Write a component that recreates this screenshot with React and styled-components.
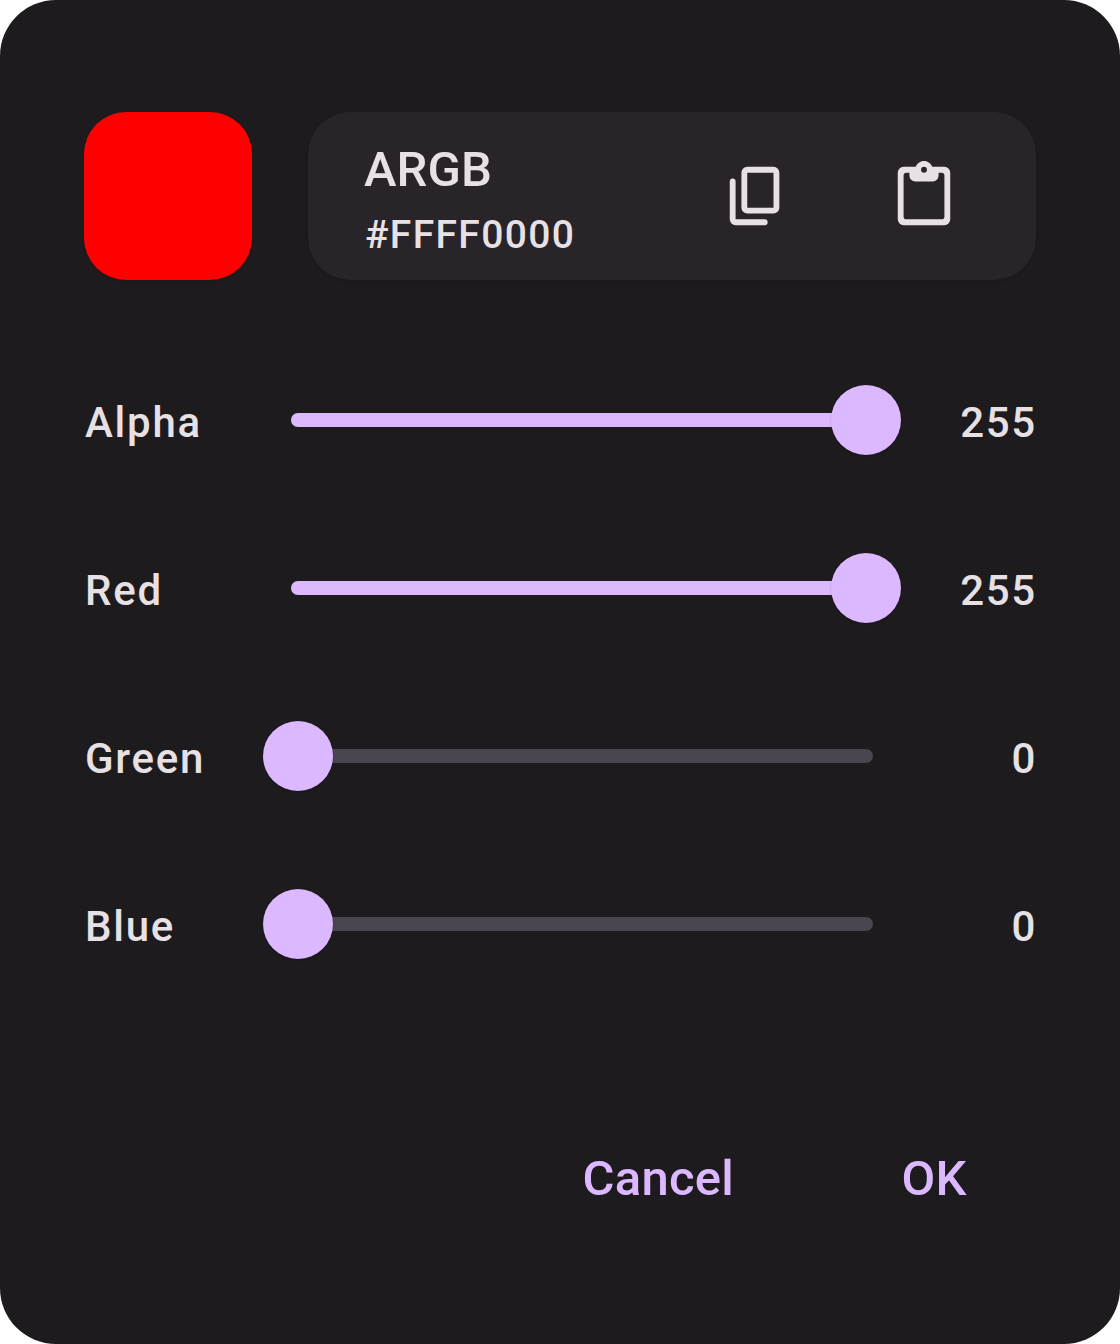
import React, { useState } from "react";
import styled, { createGlobalStyle } from "styled-components";

const GlobalStyle = createGlobalStyle`
  * { box-sizing: border-box; }
  body { margin: 0; background: #ffffff; }
`;

const Dialog = styled.main`
  display: flex;
  flex-direction: column;
  width: 1120px;
  height: 1344px;
  padding: 112px 84px 0;
  border-radius: 56px;
  background: #1d1b1e;
  color: #e7e1e5;
  font-family: Roboto, "Liberation Sans", sans-serif;
  font-weight: 500;
`;

const Header = styled.header`
  display: flex;
  gap: 56px;
  height: 168px;
`;

const Swatch = styled.div`
  width: 168px;
  height: 168px;
  border-radius: 42px;
  background: ${(p) => p.$color};
  box-shadow: 0 1px 3px rgba(0, 0, 0, 0.14);
`;

const ValueCard = styled.section`
  display: flex;
  flex: 1;
  align-items: center;
  padding: 0 28px 0 56px;
  border-radius: 42px;
  background: #282429;
  box-shadow: 0 1px 3px rgba(0, 0, 0, 0.14);
`;

const ValueText = styled.div`
  display: flex;
  flex: 1;
  flex-direction: column;
  padding-top: 6px;
`;

const Format = styled.span`
  font-size: 49px;
  line-height: 70px;
  letter-spacing: 0.1px;
`;

const Hex = styled.span`
  height: 58px;
  padding: 2px 0 0 1px;
  font-size: 39px;
  line-height: 56px;
  letter-spacing: 1.35px;
`;

const IconButton = styled.button`
  display: grid;
  place-items: center;
  width: 168px;
  height: 168px;
  padding: 0;
  border: 0;
  background: none;
  color: inherit;
`;

const Icon = styled.svg`
  width: 70px;
  height: 70px;
  fill: currentColor;
`;

const Channels = styled.section`
  display: flex;
  flex-direction: column;
  padding-top: 56px;
`;

const Channel = styled.div`
  display: grid;
  grid-template-columns: 206px 582px 1fr;
  align-items: center;
  height: 168px;
  margin: 0 -1px 0 1px;
`;

const ChannelText = styled.span`
  padding-top: 5px;
  font-size: 42px;
  line-height: 56px;
  letter-spacing: 1.75px;
  text-align: ${(p) => p.$align || "left"};
`;

const Track = styled.div`
  position: relative;
  height: 14px;
  border-radius: 7px;
  background: #4a454e;
`;

const Fill = styled.div`
  height: 14px;
  border-radius: 7px;
  background: #dbb8ff;
`;

const Thumb = styled.div`
  position: absolute;
  top: -28px;
  width: 70px;
  height: 70px;
  border-radius: 50%;
  background: #dbb8ff;
  box-shadow: 0 1px 3px rgba(0, 0, 0, 0.14);
`;

const Actions = styled.footer`
  display: flex;
  justify-content: flex-end;
  gap: 56px;
  padding-top: 100px;
`;

const TextButton = styled.button`
  min-width: 203px;
  height: 140px;
  padding: 0 43px 0 42px;
  border: 0;
  background: none;
  color: #dbb8ff;
  font: inherit;
  font-size: 49px;
  letter-spacing: 0.25px;
`;

const CopyIcon = () => (
  <Icon viewBox="0 0 24 24">
    <path
      fillRule="evenodd"
      d="M9 2H18A2 2 0 0 1 20 4V16A2 2 0 0 1 18 18H9A2 2 0 0 1 7 16V4A2 2 0 0 1 9 2ZM9 4V16H18V4Z"
    />
    <path d="M4 6A1 1 0 0 1 5 7V20H15A1 1 0 0 1 15 22H5A2 2 0 0 1 3 20V7A1 1 0 0 1 4 6Z" />
  </Icon>
);

const PasteIcon = () => (
  <Icon viewBox="0 0 24 24">
    <path
      fillRule="evenodd"
      d="M5 2H9.18C9.6.84 10.7 0 12 0S14.4.84 14.82 2H19A2 2 0 0 1 21 4V20A2 2 0 0 1 19 22H5A2 2 0 0 1 3 20V4A2 2 0 0 1 5 2ZM12 2A1 1 0 0 0 12 4A1 1 0 0 0 12 2ZM6 4Q5 4 5 5V19Q5 20 6 20H18Q19 20 19 19V5Q19 4 18 4H17V5A2 2 0 0 1 15 7H9A2 2 0 0 1 7 5V4Z"
    />
  </Icon>
);

const channels = [
  { name: "Alpha", value: 255 },
  { name: "Red", value: 255 },
  { name: "Green", value: 0 },
  { name: "Blue", value: 0 },
];

function Slider({ value }) {
  const center = 7 + (value / 255) * 568;
  return (
    <Track>
      {value > 0 && <Fill style={{ width: center }} />}
      <Thumb style={{ left: center - 35 }} />
    </Track>
  );
}

export default function App() {
  const [values] = useState(channels);
  return (
    <>
      <GlobalStyle />
      <Dialog>
        <Header>
          <Swatch $color="#ff0000" />
          <ValueCard>
            <ValueText>
              <Format>ARGB</Format>
              <Hex>#FFFF0000</Hex>
            </ValueText>
            <IconButton aria-label="Copy"><CopyIcon /></IconButton>
            <IconButton aria-label="Paste"><PasteIcon /></IconButton>
          </ValueCard>
        </Header>
        <Channels>
          {values.map((c) => (
            <Channel key={c.name}>
              <ChannelText>{c.name}</ChannelText>
              <Slider value={c.value} />
              <ChannelText $align="right">{c.value}</ChannelText>
            </Channel>
          ))}
        </Channels>
        <Actions>
          <TextButton>Cancel</TextButton>
          <TextButton>OK</TextButton>
        </Actions>
      </Dialog>
    </>
  );
}
